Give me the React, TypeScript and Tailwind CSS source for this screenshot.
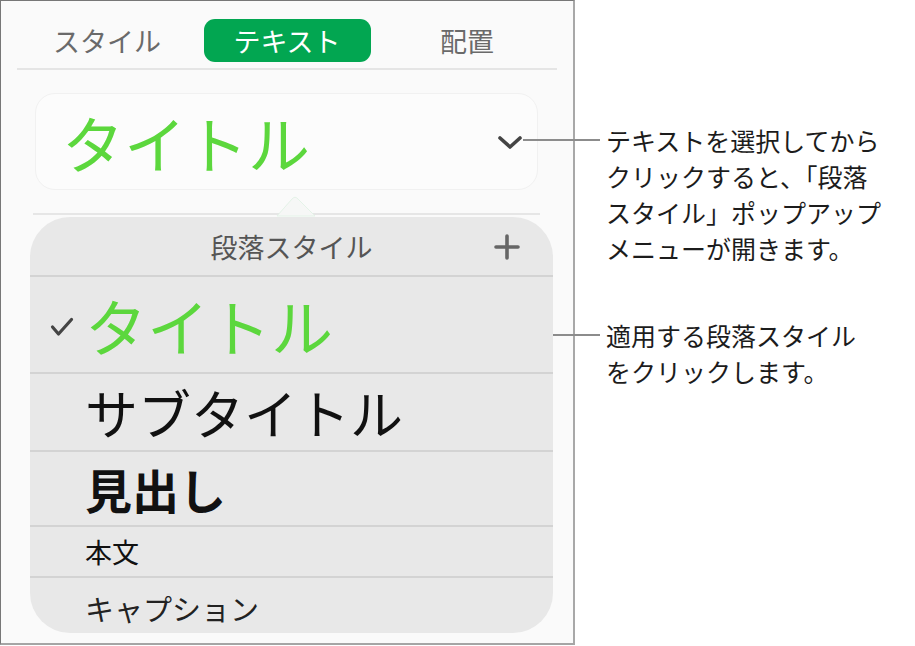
export default function App() {
  return (
    <div className="relative flex w-[915px] h-[646px] bg-white font-['Noto_Sans_CJK_JP',sans-serif]">
      <Panel />
      <div className="flex flex-col pl-[31px] pt-[122px] text-[25px] leading-[36px] text-[#1c1c1c]">
        <p>
          テキストを選択してから
          <br />
          クリックすると、「段落
          <br />
          スタイル」ポップアップ
          <br />
          メニューが開きます。
        </p>
        <p className="mt-[51px]">
          適用する段落スタイル
          <br />
          をクリックします。
        </p>
      </div>
      {/* leader lines */}
      <div className="absolute left-[523px] top-[139px] h-[2px] w-[77px] bg-[#8c8c8c]" />
      <div className="absolute left-[553px] top-[334px] h-[2px] w-[47px] bg-[#8c8c8c]" />
    </div>
  );
}

function Panel() {
  return (
    <div className="relative box-border flex h-[645px] w-[575px] shrink-0 flex-col border-l border-t border-b-2 border-r-2 border-l-[#777] border-t-[#777] border-b-[#a5a5a5] border-r-[#a8a8a8] bg-[#fafafa]">
      {/* tabs */}
      <div className="ml-[16px] mt-[18px] grid h-[43px] w-[540px] grid-cols-3 items-center text-[27px] leading-none">
        <span className="text-center text-[#6a6a6a]">スタイル</span>
        <span className="mx-auto flex h-[43px] w-[167px] items-center justify-center rounded-[11px] bg-[#02a651] text-white">
          テキスト
        </span>
        <span className="text-center text-[#6a6a6a]">配置</span>
      </div>
      <div className="ml-[16px] mt-[6px] h-[2px] w-[540px] bg-[#e5e5e5]" />

      {/* current style */}
      <div className="ml-[34px] mt-[23px] box-border flex h-[97px] w-[503px] items-center justify-between rounded-[20px] border border-[#f1f1f1] bg-[#fcfcfc] pl-[26px] pr-[14px]">
        <span className="text-[62px] leading-none text-[#5cd73d]">タイトル</span>
        <svg width="26" height="15" viewBox="0 0 26 15" className="mt-[2px]">
          <polyline points="3,3 13,12 23,3" fill="none" stroke="#444" strokeWidth="3.6" strokeLinecap="round" strokeLinejoin="round" />
        </svg>
      </div>
      <div className="ml-[32px] mt-[23px] h-[2px] w-[507px] bg-[#e6e6e6]" />

      {/* popover arrow */}
      <svg width="40" height="23" viewBox="0 0 40 23" className="absolute left-[275px] top-[193px]">
        <path d="M1 22 L16 5 Q19 1.5 22 5 L39 22 Z" fill="#f6f7f6" stroke="#e4f3e8" strokeWidth="1" />
      </svg>

      {/* popover */}
      <div className="ml-[29px] mt-[2px] flex h-[416px] w-[523px] flex-col overflow-hidden rounded-[40px] bg-[#e8e8e8]">
        <div className="relative box-border flex h-[60px] shrink-0 items-center justify-center border-b-2 border-[#d3d3d3]">
          <span className="text-[27px] leading-none text-[#555]">段落スタイル</span>
          <svg width="26" height="26" viewBox="0 0 26 26" className="absolute right-[33px] top-[17px]">
            <path d="M13 2 V24 M2 13 H24" stroke="#666" strokeWidth="3.6" strokeLinecap="round" />
          </svg>
        </div>
        <div className="relative box-border flex h-[97px] shrink-0 items-center border-b-2 border-[#d3d3d3] pl-[55px]">
          <svg width="24" height="20" viewBox="0 0 24 20" className="absolute left-[20px] top-[40px]">
            <polyline points="2.5,10 8.5,17 21.5,2.5" fill="none" stroke="#444" strokeWidth="3.2" strokeLinecap="round" strokeLinejoin="round" />
          </svg>
          <span className="text-[62px] leading-none text-[#5cd73d]">タイトル</span>
        </div>
        <div className="box-border flex h-[78px] shrink-0 items-center border-b-2 border-[#d3d3d3] pl-[55px]">
          <span className="text-[53px] leading-none text-[#111]">サブタイトル</span>
        </div>
        <div className="box-border flex h-[75px] shrink-0 items-center border-b-2 border-[#d3d3d3] pl-[55px]">
          <span className="text-[47px] font-bold leading-none text-[#111]">見出し</span>
        </div>
        <div className="box-border flex h-[51px] shrink-0 items-center border-b-2 border-[#d3d3d3] pl-[55px]">
          <span className="text-[27px] leading-none text-[#111]">本文</span>
        </div>
        <div className="flex h-[60px] shrink-0 items-center pl-[55px]">
          <span className="text-[29px] leading-none text-[#222]">キャプション</span>
        </div>
      </div>
    </div>
  );
}
